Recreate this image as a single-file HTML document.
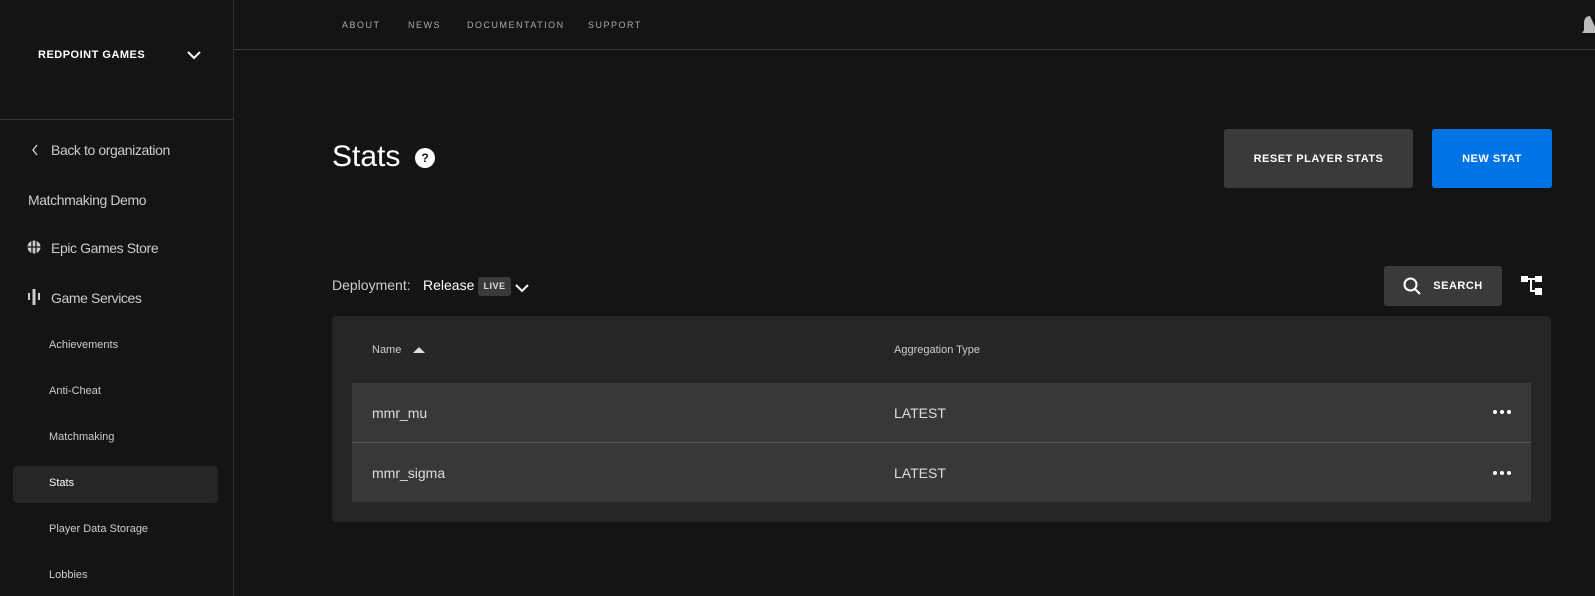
<!DOCTYPE html>
<html><head><style>
*{margin:0;padding:0;box-sizing:border-box}
body{width:1595px;height:596px;background:#141414;font-family:"Liberation Sans",sans-serif;color:#ddd;position:relative;overflow:hidden}
.a{position:absolute;white-space:nowrap}
.side{position:absolute;left:0;top:0;width:234px;height:596px;border-right:1px solid #2e2e2e}
.nav{font-size:9px;letter-spacing:1.5px;color:#aaa;top:20px}
.sb{font-size:14px;color:#ccc;letter-spacing:-0.4px}
.sub{font-size:11px;color:#ccc;left:49px}
.btn{position:absolute;border-radius:3px;font-size:11px;font-weight:bold;color:#fff;letter-spacing:0.5px;display:flex;align-items:center;justify-content:center}
</style></head><body>
<div class="side"></div>
<div class="a" style="left:0;top:119px;width:234px;border-top:1px solid #333"></div>
<div class="a" style="left:234px;top:49px;width:1361px;border-top:1px solid #3a3a3a"></div>
<div class="a" style="left:38px;top:49px;font-size:11px;font-weight:bold;color:#fff;letter-spacing:0.5px">REDPOINT GAMES</div>
<svg class="a" style="left:187px;top:50px" width="14" height="10"><path d="M1 2l6 6 6-6" stroke="#fff" stroke-width="2" fill="none"/></svg>
<div class="a nav" style="left:342px">ABOUT</div>
<div class="a nav" style="left:408px">NEWS</div>
<div class="a nav" style="left:467px">DOCUMENTATION</div>
<div class="a nav" style="left:588px">SUPPORT</div>
<svg class="a" style="left:1582px;top:14px" width="13" height="24"><path d="M8 2c-4 0-6 3-6 7v7l-2 3h16z" fill="#bbb"/></svg>
<svg class="a" style="left:31px;top:144px" width="8" height="12"><path d="M6 1L2 6l4 5" stroke="#ccc" stroke-width="1.4" fill="none"/></svg>
<div class="a sb" style="left:51px;top:142px">Back to organization</div>
<div class="a sb" style="left:28px;top:192px">Matchmaking Demo</div>
<svg class="a" style="left:27px;top:240px" width="14" height="14"><circle cx="7" cy="7" r="6.5" fill="#ccc"/><path d="M5 0v14M9 0v14M0 7h14" stroke="#141414" stroke-width="1.3"/></svg>
<div class="a sb" style="left:51px;top:240px">Epic Games Store</div>
<svg class="a" style="left:28px;top:289px" width="12" height="16"><rect x="0" y="4" width="2" height="7" fill="#ccc"/><rect x="4.5" y="0" width="3" height="16" fill="#ccc"/><rect x="10" y="4" width="2" height="7" fill="#ccc"/></svg>
<div class="a sb" style="left:51px;top:290px">Game Services</div>
<div class="a sub" style="top:339px">Achievements</div>
<div class="a sub" style="top:385px">Anti-Cheat</div>
<div class="a sub" style="top:431px">Matchmaking</div>
<div class="a" style="left:13px;top:466px;width:205px;height:37px;background:#262626;border-radius:4px"></div>
<div class="a sub" style="top:477px;color:#fff">Stats</div>
<div class="a sub" style="top:523px">Player Data Storage</div>
<div class="a sub" style="top:569px">Lobbies</div>
<div class="a" style="left:332px;top:140px;font-size:30px;color:#fff">Stats</div>
<div class="a" style="left:415px;top:148px;width:20px;height:20px;border-radius:50%;background:#fff;color:#141414;font-size:12px;font-weight:bold;text-align:center;line-height:20px">?</div>
<div class="btn" style="left:1224px;top:129px;width:189px;height:59px;background:#3a3a3a">RESET PLAYER STATS</div>
<div class="btn" style="left:1432px;top:129px;width:120px;height:59px;background:#0074e4">NEW STAT</div>
<div class="a" style="left:332px;top:277px;font-size:14px;color:#ccc">Deployment:</div>
<div class="a" style="left:423px;top:277px;font-size:14px;color:#fff">Release</div>
<div class="a" style="left:478px;top:277px;width:33px;height:19px;background:#3a3a3a;border-radius:3px;font-size:9px;font-weight:bold;color:#ddd;text-align:center;line-height:19px;letter-spacing:0.5px">LIVE</div>
<svg class="a" style="left:515px;top:283px" width="15" height="10"><path d="M1 2l6 6 6-6" stroke="#fff" stroke-width="2" fill="none"/></svg>
<div class="btn" style="left:1384px;top:266px;width:118px;height:40px;background:#3a3a3a"><svg width="18" height="18" style="margin-right:12px"><circle cx="7.5" cy="7.5" r="6" stroke="#fff" stroke-width="2" fill="none"/><path d="M12 12l5 5" stroke="#fff" stroke-width="2"/></svg>SEARCH</div>
<svg class="a" style="left:1521px;top:276px" width="21" height="19"><rect x="0" y="0" width="7" height="6" fill="#fff"/><rect x="14" y="0" width="7" height="6" fill="#fff"/><rect x="14" y="12" width="7" height="7" fill="#fff"/><path d="M7 3h7M10 3v12h4" stroke="#fff" stroke-width="2" fill="none"/></svg>
<div class="a" style="left:332px;top:316px;width:1219px;height:206px;background:#262626;border-radius:4px"></div>
<div class="a" style="left:372px;top:344px;font-size:11px;color:#ccc">Name</div>
<svg class="a" style="left:413px;top:346px" width="12" height="8"><path d="M0 7l6-6 6 6z" fill="#ddd"/></svg>
<div class="a" style="left:894px;top:344px;font-size:11px;color:#ccc">Aggregation Type</div>
<div class="a" style="left:352px;top:383px;width:1179px;height:119px;background:#383838"></div>
<div class="a" style="left:352px;top:442px;width:1179px;border-top:1px solid #555"></div>
<div class="a" style="left:372px;top:405px;font-size:14px;color:#ddd">mmr_mu</div>
<div class="a" style="left:894px;top:405px;font-size:14px;color:#ddd">LATEST</div>
<div class="a" style="left:372px;top:465px;font-size:14px;color:#ddd">mmr_sigma</div>
<div class="a" style="left:894px;top:465px;font-size:14px;color:#ddd">LATEST</div>
<svg class="a" style="left:1492px;top:409px" width="20" height="6"><circle cx="3" cy="3" r="2" fill="#fff"/><circle cx="10" cy="3" r="2" fill="#fff"/><circle cx="17" cy="3" r="2" fill="#fff"/></svg>
<svg class="a" style="left:1492px;top:470px" width="20" height="6"><circle cx="3" cy="3" r="2" fill="#fff"/><circle cx="10" cy="3" r="2" fill="#fff"/><circle cx="17" cy="3" r="2" fill="#fff"/></svg>
</body></html>
